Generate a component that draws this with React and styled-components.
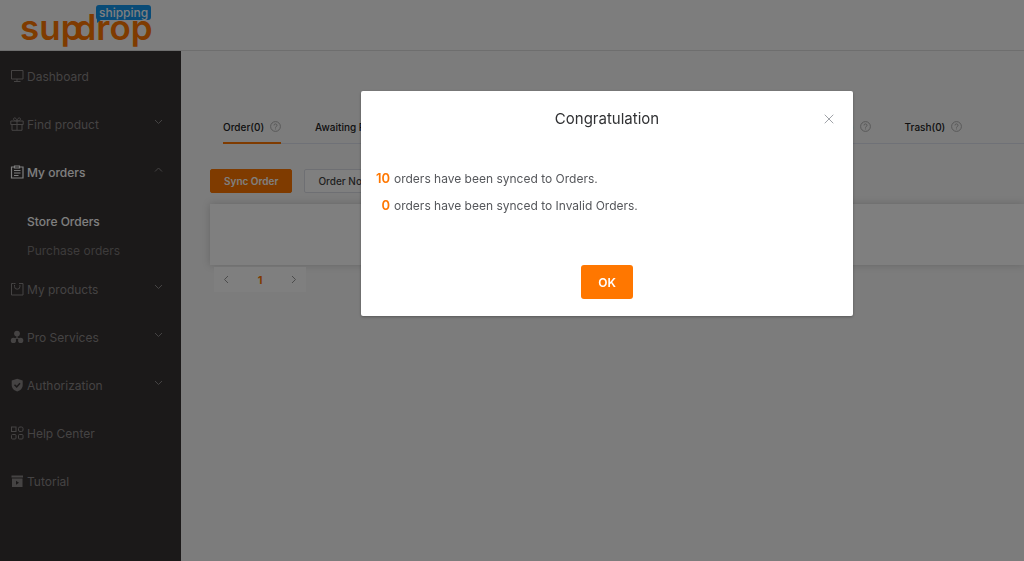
import React from "react"
import styled, { createGlobalStyle } from "styled-components"


const primaryColor = '#ff7700'
const sidebarWidth = '181px'

const GlobalStyle = createGlobalStyle`
    *, *::before, *::after {
        box-sizing: border-box;
    }
    body {
        margin: 0;
        font-family: Inter, "Liberation Sans", sans-serif;
        font-size: 12px;
        color: #333;
    }
    button {
        font-family: inherit;
        cursor: pointer;
    }
`

const Page = styled.div`
    display: flex;
    flex-direction: column;
    min-height: 100vh;
    background-color: #f8f8f8;
`
const Header = styled.header`
    display: flex;
    align-items: center;
    height: 51px;
    padding: 4px 20px 0;
    background-color: #fbfbfb;
    border-bottom: 1px solid #dcdcdc;
`
const Logo = styled.a`
    position: relative;
    display: flex;
    color: ${primaryColor};
    font-size: 35px;
    line-height: 44px;
    font-weight: 600;
    text-decoration: none;
`
/* the second half of the name is tied to the first one */
const LogoTail = styled.span`
    margin-left: -8px;
`
const LogoBadge = styled.span`
    position: absolute;
    top: 0;
    left: 76px;
    padding: 0 3px;
    border-radius: 3px;
    color: #fff;
    background-color: #1296ee;
    font-size: 12px;
    line-height: 15px;
    font-weight: 500;

    &::after {
        content: '';
        position: absolute;
        top: 14px;
        left: 1px;
        border-top: 4px solid #1296ee;
        border-right: 5px solid transparent;
    }
`

const Body = styled.div`
    display: flex;
    flex: 1;
`
const Sidebar = styled.nav`
    flex: none;
    width: ${sidebarWidth};
    padding-top: 1px;
    background-color: #363233;
`
const MenuLink = styled.a`
    display: flex;
    align-items: center;
    gap: 3px;
    height: 48px;
    padding: 0 18px 0 10px;
    font-size: 12px;
    font-weight: ${({ $active }) => ($active ? 500 : 400)};
    color: ${({ $active }) => ($active ? '#fff' : '#8a8686')};
    text-decoration: none;
`
const MenuLabel = styled.span`
    flex: 1;
`
const MenuArrow = styled.span`
    display: flex;
    padding-bottom: 6px;
    color: #8a8686;
`
const SubMenu = styled.div`
    padding-top: 11px;
`
const SubLink = styled.a`
    display: block;
    padding-left: 27px;
    line-height: 29px;
    font-weight: ${({ $active }) => ($active ? 500 : 400)};
    color: ${({ $active }) => ($active ? '#fff' : '#7a7676')};
    text-decoration: none;
`

const Main = styled.main`
    flex: 1;
    min-width: 0;
    overflow: hidden;
    padding: 60px 0 0 29px;
`
const Tabs = styled.div`
    display: flex;
    gap: 34px;
    height: 33px;
    margin-left: 13px;
    border-bottom: 1px solid #dfe2ee;
`
const Tab = styled.button`
    display: flex;
    flex: none;
    align-items: center;
    gap: 6px;
    height: 33px;
    padding: 0;
    border: 0;
    border-bottom: 2px solid ${({ $active }) => ($active ? primaryColor : 'transparent')};
    background: none;
    font-size: 10px;
    font-weight: 500;
    color: #222;
    white-space: nowrap;
`
const Toolbar = styled.div`
    display: flex;
    gap: 12px;
    padding: 25px 0 11px;
`
const ToolButton = styled.button`
    height: 24px;
    padding: 0 13px;
    border: 1px solid ${({ $primary }) => ($primary ? primaryColor : '#dcdfe6')};
    border-radius: 2px;
    color: ${({ $primary }) => ($primary ? '#fff' : '#444')};
    background-color: ${({ $primary }) => ($primary ? primaryColor : '#fff')};
    font-size: 10px;
    font-weight: ${({ $primary }) => ($primary ? 600 : 500)};
`
const OrderPanel = styled.section`
    height: 61px;
    background-color: #fff;
    box-shadow: 0 0 8px rgba(0, 0, 0, 0.18);
`
const Pagination = styled.nav`
    display: inline-flex;
    align-items: center;
    justify-content: space-between;
    width: 92px;
    height: 25px;
    margin: 2px 0 0 4px;
    padding: 0 6px;
    background-color: #fff;
`
const PageButton = styled.button`
    display: flex;
    padding: 0 2px;
    border: 0;
    background: none;
    color: ${({ $current }) => ($current ? primaryColor : '#999')};
    font-size: 11px;
    font-weight: 700;
`

const Overlay = styled.div`
    position: fixed;
    inset: 0;
    display: flex;
    align-items: flex-start;
    justify-content: center;
    padding: 91px 0 0 190px;
    background-color: rgba(0, 0, 0, 0.5);
`
const Dialog = styled.div`
    width: 492px;
    padding-bottom: 17px;
    border-radius: 2px;
    background-color: #fff;
    box-shadow: 0 1px 3px rgba(0, 0, 0, 0.3);
`
const DialogHeader = styled.div`
    display: grid;
    grid-template-columns: 1fr auto 1fr;
    align-items: center;
    height: 55px;
    padding: 0 18px;
`
const DialogTitle = styled.h2`
    grid-column: 2;
    margin: 0;
    font-size: 15px;
    font-weight: 400;
    color: #303133;
`
const CloseButton = styled.button`
    display: flex;
    justify-self: end;
    padding: 0;
    border: 0;
    background: none;
    color: #909399;
`
const Results = styled.div`
    padding: 19px 14px 46px;
`
const ResultLine = styled.p`
    display: flex;
    gap: 4px;
    margin: 0;
    font-size: 12px;
    line-height: 27px;
    color: #55575b;
`
const Count = styled.strong`
    width: 15px;
    font-size: 13px;
    font-weight: 600;
    text-align: right;
    color: ${primaryColor};
`
const DialogFooter = styled.div`
    display: flex;
    justify-content: center;
`
const OkButton = styled.button`
    width: 52px;
    height: 34px;
    border: 0;
    border-radius: 3px;
    color: #fff;
    background-color: ${primaryColor};
    font-size: 12px;
    font-weight: 600;
`


const Icon = ({ children, size = 14 }) => (
    <svg width={size} height={size} viewBox="0 0 14 14" fill="none" stroke="currentColor" aria-hidden="true">
        {children}
    </svg>
)

const icons = {
    monitor: <path d="M1.500 1.500h11.500v8.500h-11.500zM7 10v2.500M4 12.500h6.500" />,
    gift: <path d="M.8 4h12.400v3.500H.8zM2 7.500v5.800h10V7.500M7 4v9.300M7 4C5 4 3 3 3.600 1.500 4.500 0 7 1.500 7 4c0-2.500 2.500-4 3.400-2.500C11 3 9 4 7 4" />,
    clipboard: <path strokeWidth="1.200" d="M4.500 2H1.500v11h11.500V2H9.500M4.500 1h5v2h-5zM4 5.500h6.500M4 8h6.500M4 10.500h4.500" />,
    box: <path d="M3.500 1.500h-2v11.500h11.500v-11.500h-2M4.500 3v1.500a2.700 2.700 0 0 0 5.400 0V3M3.500 1.500h2M9 1.500h2" />,
    services: (
        <g fill="currentColor" stroke="none">
            <circle cx="7" cy="3.600" r="2.900" />
            <circle cx="3.400" cy="10.400" r="2.600" />
            <circle cx="10.700" cy="10.400" r="2.600" />
            <path d="M6.500 5h1v2.500L10 9l-.5 1L7 8.500 4.500 10 4 9l2.500-1.500z" />
        </g>
    ),
    shield: (
        <>
            <path fill="currentColor" stroke="none" d="M7.200 .8l5.500 1.800V7c0 3.500-2.400 5.500-5.500 6.500C4.100 12.500 1.700 10.500 1.700 7V2.600z" />
            <path stroke="#363233" strokeWidth="1.500" d="M4.500 6.800l2.200 2.100L10 5.200" />
        </>
    ),
    grid: (
        <>
            <rect x="1.500" y="1" width="4.500" height="4.500" />
            <rect x="8.500" y="1" width="4.500" height="4.500" rx="1.500" />
            <rect x="1.500" y="8.500" width="4.500" height="4.500" rx="1" />
            <rect x="8.500" y="8.500" width="4.500" height="4.500" rx="1" />
        </>
    ),
    video: (
        <>
            <path fill="currentColor" stroke="none" d="M1.500 1.500h11.500v2h-11.500zM2 4.500h10.500v8.500H2z" />
            <path fill="#363233" stroke="none" d="M6 6.800v4L9 8.800z" />
        </>
    ),
}

const Chevron = ({ d }) => (
    <svg width="9" height="9" viewBox="0 0 9 9" fill="none" stroke="currentColor" aria-hidden="true">
        <path d={d} />
    </svg>
)

const HelpIcon = () => (
    <svg width="11" height="11" viewBox="0 0 11 11" fill="none" stroke="#aaa" strokeWidth="0.9" aria-hidden="true">
        <circle cx="5.5" cy="5.5" r="4.900" />
        <path d="M4 4.400a1.500 1.500 0 1 1 2.200 1.300c-.5.200-.7.500-.7 1M5.500 7.500v.9" />
    </svg>
)

const menu = [
    { label: 'Dashboard', icon: 'monitor' },
    { label: 'Find product', icon: 'gift', expandable: true },
    { label: 'My orders', icon: 'clipboard', expandable: true, active: true, items: ['Store Orders', 'Purchase orders'] },
    { label: 'My products', icon: 'box', expandable: true },
    { label: 'Pro Services', icon: 'services', expandable: true },
    { label: 'Authorization', icon: 'shield', expandable: true },
    { label: 'Help Center', icon: 'grid' },
    { label: 'Tutorial', icon: 'video' },
]

const tabs = ['Order', 'Awaiting Processing', 'Awaiting Fulfillment', 'Partially Fulfilled', 'Invalid Order', 'Trash']

const App = () => (
    <Page>
        <GlobalStyle />
        <Header>
            <Logo href="#">
                <span>sup</span>
                <LogoTail>drop</LogoTail>
                <LogoBadge>shipping</LogoBadge>
            </Logo>
        </Header>

        <Body>
            <Sidebar>
                {menu.map(({ label, icon, expandable, active, items }) => (
                    <React.Fragment key={label}>
                        <MenuLink href="#" $active={active}>
                            <Icon>{icons[icon]}</Icon>
                            <MenuLabel>{label}</MenuLabel>
                            {expandable &&
                                <MenuArrow>
                                    <Chevron d={active ? 'M1 6.500l3.500-3.500L8 6.500' : 'M1 3l3.500 3.500L8 3'} />
                                </MenuArrow>
                            }
                        </MenuLink>
                        {items &&
                            <SubMenu>
                                {items.map((item, i) => (
                                    <SubLink key={item} href="#" $active={i === 0}>{item}</SubLink>
                                ))}
                            </SubMenu>
                        }
                    </React.Fragment>
                ))}
            </Sidebar>

            <Main>
                <Tabs>
                    {tabs.map((tab, i) => (
                        <Tab key={tab} $active={i === 0}>
                            {tab}(0)
                            <HelpIcon />
                        </Tab>
                    ))}
                </Tabs>
                <Toolbar>
                    <ToolButton $primary>Sync Order</ToolButton>
                    <ToolButton>Order Note</ToolButton>
                </Toolbar>
                <OrderPanel />
                <Pagination>
                    <PageButton aria-label="Previous page"><Chevron d="M6 1L2.500 4.500 6 8" /></PageButton>
                    <PageButton $current>1</PageButton>
                    <PageButton aria-label="Next page"><Chevron d="M3 1l3.500 3.500L3 8" /></PageButton>
                </Pagination>
            </Main>
        </Body>

        <Overlay>
            <Dialog role="dialog" aria-labelledby="dialog-title">
                <DialogHeader>
                    <DialogTitle id="dialog-title">Congratulation</DialogTitle>
                    <CloseButton aria-label="Close">
                        <Icon size={12}><path d="M2 2l10 10M12 2L2 12" /></Icon>
                    </CloseButton>
                </DialogHeader>
                <Results>
                    <ResultLine><Count>10</Count>orders have been synced to Orders.</ResultLine>
                    <ResultLine><Count>0</Count>orders have been synced to Invalid Orders.</ResultLine>
                </Results>
                <DialogFooter>
                    <OkButton>OK</OkButton>
                </DialogFooter>
            </Dialog>
        </Overlay>
    </Page>
)

export default App
